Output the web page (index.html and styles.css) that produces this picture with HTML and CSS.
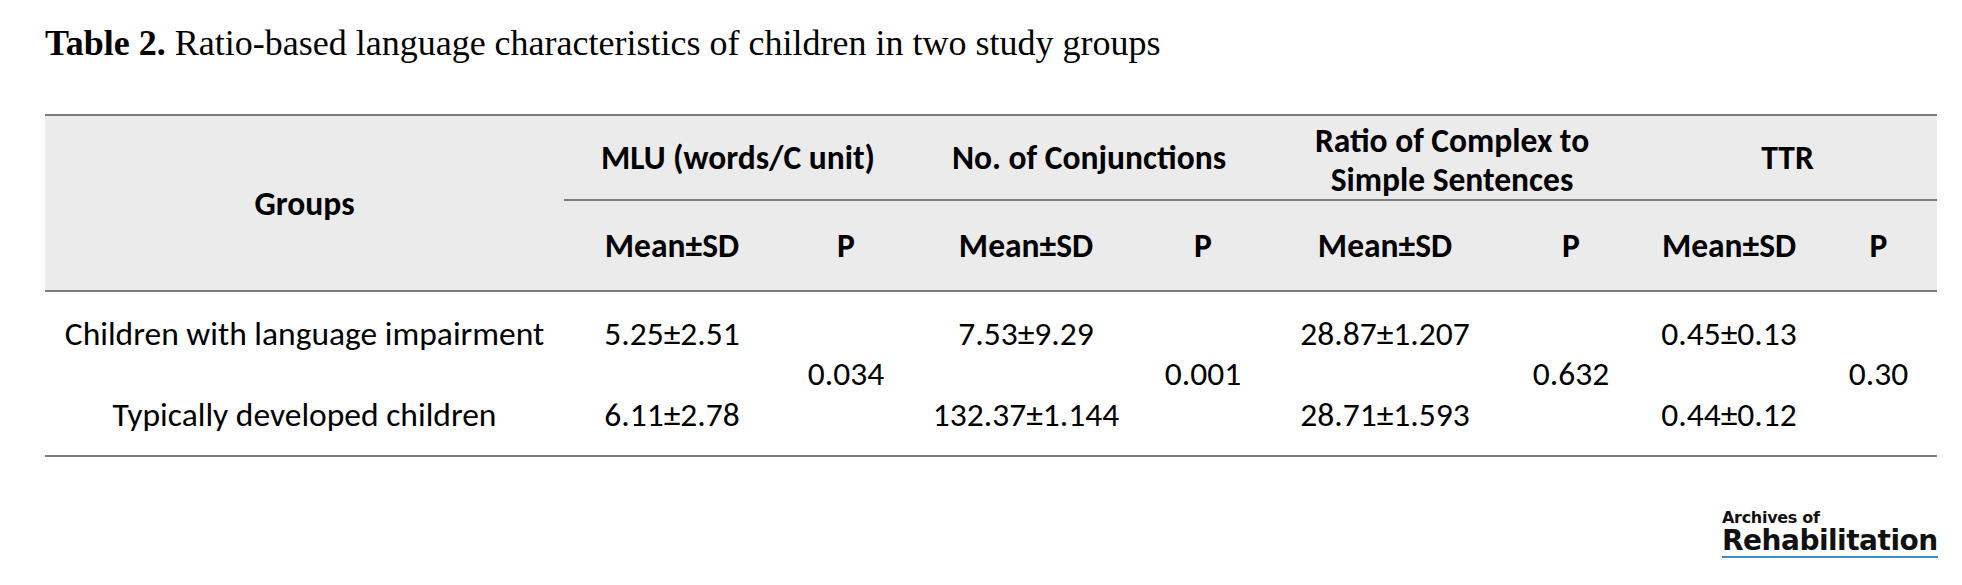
FILE: index.html
```html
<!DOCTYPE html>
<html lang="en">
<head>
<meta charset="utf-8">
<title>Table 2</title>
<link rel="stylesheet" href="styles.css">
</head>
<body>
<div class="page">
  <h1 class="title"><b>Table 2.</b> Ratio-based language characteristics of children in two study groups</h1>
  <table class="data">
    <colgroup>
      <col class="c-groups">
      <col class="c-mlu-m"><col class="c-mlu-p">
      <col class="c-con-m"><col class="c-con-p">
      <col class="c-rat-m"><col class="c-rat-p">
      <col class="c-ttr-m"><col class="c-ttr-p">
    </colgroup>
    <thead>
      <tr class="h1">
        <th rowspan="2" class="groups">Groups</th>
        <th colspan="2" class="grp">MLU (words/C unit)</th>
        <th colspan="2" class="grp">No. of Conjunctions</th>
        <th colspan="2" class="grp two">Ratio of Complex to<br>Simple Sentences</th>
        <th colspan="2" class="grp">TTR</th>
      </tr>
      <tr class="h2">
        <th>Mean±SD</th><th>P</th>
        <th>Mean±SD</th><th>P</th>
        <th>Mean±SD</th><th>P</th>
        <th>Mean±SD</th><th>P</th>
      </tr>
    </thead>
    <tbody>
      <tr class="r1">
        <td>Children with language impairment</td>
        <td>5.25±2.51</td><td rowspan="2" class="pv">0.034</td>
        <td>7.53±9.29</td><td rowspan="2" class="pv">0.001</td>
        <td>28.87±1.207</td><td rowspan="2" class="pv">0.632</td>
        <td>0.45±0.13</td><td rowspan="2" class="pv">0.30</td>
      </tr>
      <tr class="r2">
        <td>Typically developed children</td>
        <td>6.11±2.78</td>
        <td>132.37±1.144</td>
        <td>28.71±1.593</td>
        <td>0.44±0.12</td>
      </tr>
    </tbody>
  </table>
  <div class="logo">
    <span class="logo-small">Archives of</span>
    <span class="logo-big">Rehabilitation</span>
  </div>
</div>
</body>
</html>
```

FILE: styles.css
```css
html, body {
  margin: 0;
  padding: 0;
  background: #ffffff;
}

.page {
  width: 1892px;
  padding: 23px 0 0 45px;
}

.title {
  margin: 0;
  font-family: "Liberation Serif", "Times New Roman", serif;
  font-weight: normal;
  font-size: 36px;
  line-height: 40px;
  color: #000;
  white-space: nowrap;
}

.title b {
  font-weight: bold;
}

.data {
  margin-top: 51px;
  width: 1892px;
  table-layout: fixed;
  border-collapse: separate;
  border-spacing: 0;
  font-family: Carlito, Lato, "Liberation Sans", sans-serif;
  font-size: 33.5px;
  line-height: 39px;
  color: #000;
}

.c-groups { width: 519px; }
.c-mlu-m { width: 216px; }
.c-mlu-p { width: 132px; }
.c-con-m { width: 228px; }
.c-con-p { width: 126px; }
.c-rat-m { width: 238px; }
.c-rat-p { width: 134px; }
.c-ttr-m { width: 182px; }
.c-ttr-p { width: 117px; }

.data th,
.data td {
  padding: 0;
  text-align: center;
  vertical-align: middle;
  white-space: nowrap;
}

.data thead th {
  background: #ebebeb;
  font-weight: bold;
}

.h1 th {
  border-top: 2px solid #7b7b7b;
}

.h1 { height: 85px; }

.grp {
  border-bottom: 2px solid #7b7b7b;
}

.grp.two {
  padding-top: 5px;
}

.groups,
.h2 th {
  border-bottom: 2px solid #7b7b7b;
}

.h2 { height: 91px; }

.r1 { height: 82px; }
.r2 { height: 83px; }

.r2 td,
.pv {
  border-bottom: 2px solid #7b7b7b;
}

.logo {
  display: flex;
  flex-direction: column;
  align-items: flex-start;
  width: 215px;
  margin: 52px 0 0 auto;
  font-family: "DejaVu Sans", Verdana, sans-serif;
  font-weight: bold;
  color: #111;
}

.logo-small {
  font-size: 16px;
  line-height: 18px;
  letter-spacing: -0.3px;
}

.logo-big {
  font-size: 28px;
  line-height: 28px;
  letter-spacing: -0.5px;
  border-bottom: 2px solid #3b8ec2;
  padding-bottom: 1px;
}
```
